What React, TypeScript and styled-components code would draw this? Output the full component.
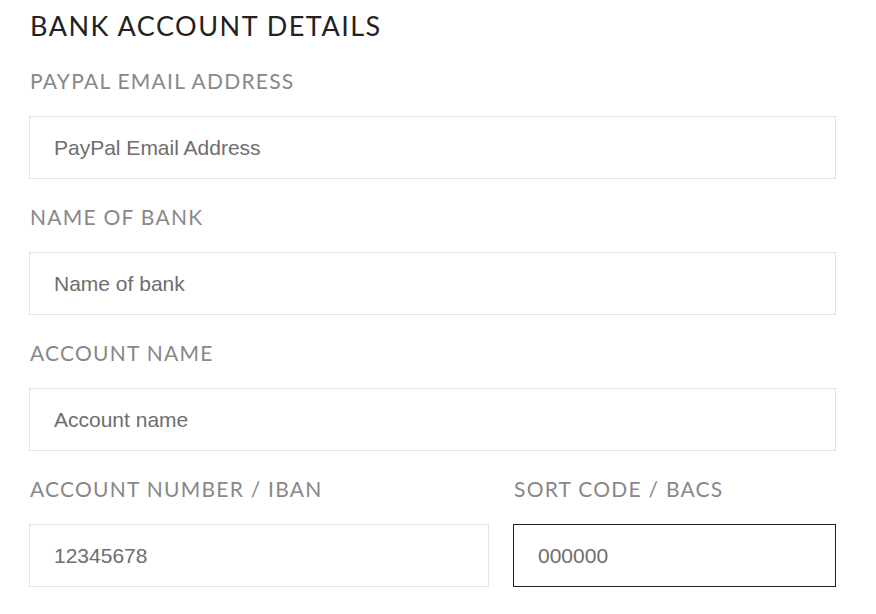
import React from "react";
import styled, { createGlobalStyle } from "styled-components";

const Global = createGlobalStyle`
  html, body { margin: 0; padding: 0; background: #fff; }
  * { box-sizing: border-box; }
`;

const Page = styled.div`
  padding: 9px 0 0 29px;
  width: 836px;
`;

const Heading = styled.h2`
  margin: 0 0 26px 1px;
  font-family: Lato, "Noto Sans", sans-serif;
  font-weight: 400;
  font-size: 27px;
  line-height: 34px;
  letter-spacing: 1.5px;
  color: #222;
  text-transform: uppercase;
`;

const Grid = styled.div`
  display: grid;
  grid-template-columns: 460px 323px;
  column-gap: 24px;
`;

const Field = styled.div<{ $span?: boolean }>`
  grid-column: ${(p) => (p.$span ? "1 / -1" : "auto")};
  display: flex;
  flex-direction: column;
  margin-bottom: 26px;
`;

const Label = styled.label`
  font-family: Lato, "Noto Sans", sans-serif;
  font-size: 21px;
  line-height: 24px;
  letter-spacing: 1.25px;
  color: #888;
  text-transform: uppercase;
  margin: 0 0 23px 1px;
`;

const Input = styled.input`
  height: 63px;
  width: 100%;
  border: 1px solid #e3e3e3;
  border-radius: 0;
  padding: 0 24px;
  font-family: "Liberation Sans", Arial, sans-serif;
  font-size: 21px;
  color: #6e6e6e;
  background: #fff;
  outline: none;
  caret-color: #000;
  &::placeholder { color: #6e6e6e; opacity: 1; }
  &:focus { border-color: #222; }
`;

export default function App() {
  return (
    <Page>
      <Global />
      <Heading>Bank Account Details</Heading>
      <Grid>
        <Field $span>
          <Label>PayPal Email Address</Label>
          <Input placeholder="PayPal Email Address" />
        </Field>
        <Field $span>
          <Label>Name of Bank</Label>
          <Input placeholder="Name of bank" />
        </Field>
        <Field $span>
          <Label>Account Name</Label>
          <Input placeholder="Account name" />
        </Field>
        <Field>
          <Label>Account Number / IBAN</Label>
          <Input placeholder="12345678" />
        </Field>
        <Field>
          <Label>Sort Code / BACS</Label>
          <Input placeholder="000000" autoFocus />
        </Field>
      </Grid>
    </Page>
  );
}
